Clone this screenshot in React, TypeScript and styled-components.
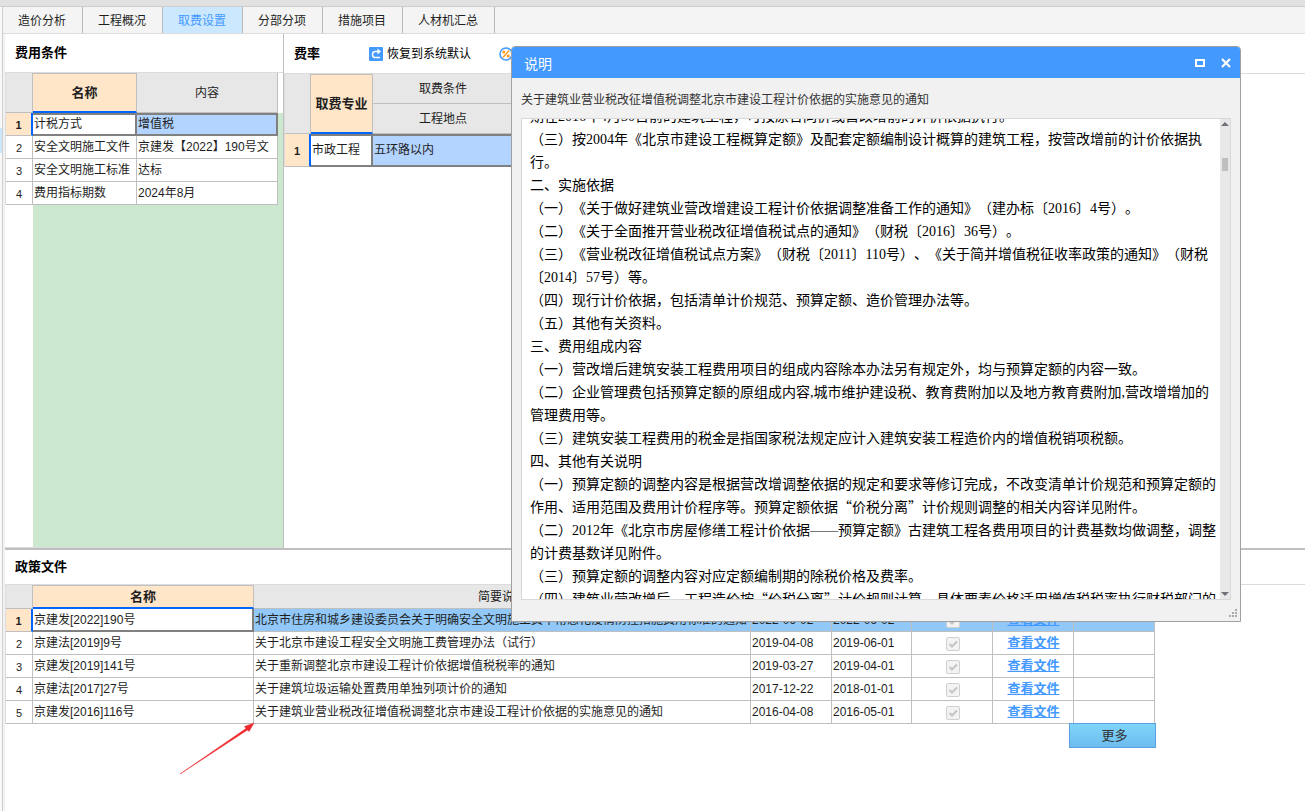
import React, { useLayoutEffect, useRef } from "react";
import styled, { createGlobalStyle, css } from "styled-components";

const line = "#bfbfbf";
const dark = "#808080";
const blue = "#4499ff";
const accent = "#0066ff";
const peach = "#ffe6c8";
const pale = "#b3d4ff";

const GlobalStyle = createGlobalStyle`
  * { box-sizing: border-box; }
  body {
    margin: 0;
    background: #fff;
    color: #1e1e1e;
    font: 12px/16px "Liberation Sans", "Noto Sans CJK SC", sans-serif;
    text-spacing-trim: space-all;
  }
  button { font: inherit; color: inherit; border: 0; padding: 0; background: none; }
`;

const Page = styled.div`
  position: relative;
  min-height: 100vh;
  display: flex;
  flex-direction: column;
  overflow: hidden;
`;
const TopStrip = styled.div`
  height: 7px;
  background: #e1e1e1;
  border-bottom: 1px solid #cccccc;
`;
const Shell = styled.div`
  flex: 1;
  display: flex;
`;
const Rail = styled.div`
  flex: none;
  width: 3px;
  background: #f8f8f8;
  border-right: 1px solid #cfcfcf;
`;
const RailMark = styled.div`
  margin-top: 121px;
  height: 25px;
  background: #cce8ff;
`;
const Workspace = styled.div`
  flex: 1;
  min-width: 0;
  display: flex;
  flex-direction: column;
`;
const TabBar = styled.nav`
  display: flex;
  height: 27px;
  background: #f4f4f4;
  border-bottom: 1px solid #dcdcdc;
`;
const Tab = styled.button<{ $active?: boolean }>`
  padding: 2px 16px 0 15px;
  border-right: 1px solid #b9b9b9;
  ${(p) => p.$active && css`background: #cce8ff; color: ${blue};`}
`;
const Content = styled.main`
  flex: 1;
  display: flex;
  flex-direction: column;
  border-left: 2px solid #f2f2f2;
`;
const Upper = styled.div`
  display: flex;
  height: 514px;
`;
const Panel = styled.section<{ $narrow?: boolean }>`
  display: flex;
  flex-direction: column;
  min-width: 0;
  ${(p) => (p.$narrow ? css`flex: none; width: 279px; border-right: 1px solid ${line};` : css`flex: 1;`)}
`;
const PanelHead = styled.header<{ $height: number }>`
  display: flex;
  align-items: center;
  height: ${(p) => p.$height}px;
  padding: 0 10px;
  border-bottom: 1px solid #dcdcdc;
`;
const Title = styled.h2`
  margin: 0;
  font-size: 13px;
  line-height: 20px;
  color: #000;
`;
const ToolButton = styled.button`
  display: flex;
  align-items: center;
  gap: 4px;
  white-space: nowrap;
  color: #000;
`;
const Tools = styled.div`
  display: flex;
  gap: 28px;
  margin-left: 49px;
`;
const GreenArea = styled.div`
  flex: 1;
  display: flex;
  flex-direction: column;
  background: linear-gradient(#fff 0 40px, #cce8cf 40px);
  border-bottom: 1px solid #dcdcdc;
`;
const Gutter = styled.div`
  flex: 1;
  width: 28px;
  background: #fff;
`;
const Grid = styled.table`
  table-layout: fixed;
  width: 0;
  border-collapse: separate;
  border-spacing: 0;
  border-left: 1px solid #dcdcdc;
`;
const HeadCell = styled.th<{ $current?: boolean }>`
  padding: 0;
  font-weight: 400;
  background: #e7e7e7;
  border-right: 1px solid ${line};
  border-bottom: 1px solid ${line};
  ${(p) => p.$current && css`
    background: ${peach};
    font-size: 13px;
    font-weight: 700;
    border-top: 1px solid ${line};
    border-bottom: 2px solid ${accent};
  `}
`;
const HeadRow = styled.tr<{ $height: number }>`
  height: ${(p) => p.$height}px;
`;
const Row = styled.tr<{ $height?: number; $fill?: string }>`
  height: ${(p) => p.$height ?? 23}px;
  background: ${(p) => p.$fill ?? "#fff"};
`;
const NumberCell = styled.th<{ $current?: boolean }>`
  padding: 1px 0 0;
  font-size: 11px;
  font-weight: 400;
  background: #fff;
  border-right: 1px solid ${line};
  border-bottom: 1px solid ${line};
  ${(p) => p.$current && css`
    background: ${peach};
    font-weight: 700;
    border-right: 2px solid ${accent};
  `}
`;
const Cell = styled.td<{ $mark?: "focus" | "picked"; $center?: boolean }>`
  padding: 0 0 0 1px;
  overflow: hidden;
  white-space: nowrap;
  text-align: ${(p) => (p.$center ? "center" : "left")};
  border-right: 1px solid ${line};
  border-bottom: 1px solid ${line};
  ${(p) => p.$mark && css`
    background: ${p.$mark === "focus" ? "#fff" : pale};
    border-color: ${dark};
    box-shadow: inset 0 2px ${dark}, inset 0 -1px ${dark}, inset -1px 0 ${dark};
  `}
`;
const FileCell = styled(Cell)<{ $focus?: boolean }>`
  ${(p) => p.$focus && css`
    background: #fff;
    border-color: ${dark};
    box-shadow: inset -1px -1px ${dark};
  `}
`;
const FileLink = styled.a`
  color: ${blue};
  font-size: 13px;
  font-weight: 700;
  text-decoration: underline;
`;
const Lower = styled.section`
  flex: 1;
  border-top: 2px solid ${line};
`;
const LowerTable = styled.div`
  width: min-content;
  display: flex;
  flex-direction: column;
`;
const MoreButton = styled.button`
  align-self: flex-end;
  width: 87px;
  height: 25px;
  margin: -1px -1px 0 0;
  padding-left: 4px;
  z-index: 1;
  color: #333;
  font-size: 13px;
  border: 1px solid #5aa0e0;
  background: linear-gradient(#7fd5f9, #6dbcf0);
`;
const CheckBox = styled.label`
  display: inline-grid;
  vertical-align: middle;
  & > * { grid-area: 1 / 1; }
  input {
    appearance: none;
    width: 14px;
    height: 14px;
    margin: 0;
    border: 1px solid #d0d0d0;
    border-radius: 2px;
    background: #f3f3f3;
  }
`;
const Dialog = styled.section`
  position: absolute;
  z-index: 2;
  left: 511px;
  top: 46px;
  width: 730px;
  height: 576px;
  display: flex;
  flex-direction: column;
  background: #f1f1f1;
  border: 1px solid #a0a0a0;
  border-radius: 4px 4px 0 0;
`;
const DialogBar = styled.header`
  display: flex;
  align-items: center;
  height: 31px;
  padding: 0 8px 0 12px;
  color: #fff;
  background: ${blue};
  border-radius: 3px 3px 0 0;
`;
const DialogTitle = styled.h2`
  flex: 1;
  margin: 0;
  padding-top: 2px;
  font-size: 14px;
  font-weight: 400;
`;
const WindowButton = styled.button`
  display: flex;
  margin-left: 14px;
`;
const Subject = styled.p`
  margin: 0;
  padding: 14px 9px 10px;
  line-height: 16px;
  color: #333;
`;
const TextBox = styled.div`
  flex: 1;
  min-height: 0;
  display: flex;
  margin: 0 9px;
  border: 1px solid #d8d8d8;
  background: #fff;
`;
const Scroller = styled.div`
  flex: 1;
  overflow: hidden;
  padding-left: 8px;
  color: #000;
  font: 14px/23px "Liberation Serif", "Noto Sans CJK SC", sans-serif;
`;
const Paragraph = styled.p`
  margin: 0;
`;
const WideMark = styled.span`
  font-family: "Noto Sans CJK SC", sans-serif;
  line-height: 1;
`;
const ScrollTrack = styled.div`
  width: 10px;
  display: flex;
  flex-direction: column;
  align-items: center;
  justify-content: space-between;
  padding: 3px 0;
  background: #e8e8e8;
`;
const ScrollThumb = styled.div`
  width: 6px;
  height: 13px;
  margin: 32px 0 auto;
  background: #bfbfbf;
`;
const DialogFoot = styled.footer`
  display: flex;
  justify-content: flex-end;
  align-items: flex-end;
  height: 21px;
  padding: 4px 3px;
`;
const Arrow = styled.svg`
  position: absolute;
  left: 178px;
  top: 720px;
  pointer-events: none;
`;

const tabs = ["造价分析", "工程概况", "取费设置", "分部分项", "措施项目", "人材机汇总"];

const conditions = [
  ["计税方式", "增值税"],
  ["安全文明施工文件", "京建发【2022】190号文"],
  ["安全文明施工标准", "达标"],
  ["费用指标期数", "2024年8月"],
];

const files = [
  ["京建发[2022]190号", "北京市住房和城乡建设委员会关于明确安全文明施工费中常态化疫情防控措施费用标准的通知", "2022-06-02", "2022-06-02"],
  ["京建法[2019]9号", "关于北京市建设工程安全文明施工费管理办法（试行）", "2019-04-08", "2019-06-01"],
  ["京建发[2019]141号", "关于重新调整北京市建设工程计价依据增值税税率的通知", "2019-03-27", "2019-04-01"],
  ["京建法[2017]27号", "关于建筑垃圾运输处置费用单独列项计价的通知", "2017-12-22", "2018-01-01"],
  ["京建发[2016]116号", "关于建筑业营业税改征增值税调整北京市建设工程计价依据的实施意见的通知", "2016-04-08", "2016-05-01"],
];

const notice = [
  "期在2016年4月30日前的建筑工程，可按原合同价或营改增前的计价依据执行。",
  "（三）按2004年《北京市建设工程概算定额》及配套定额编制设计概算的建筑工程，按营改增前的计价依据执行。",
  "二、实施依据",
  "（一）《关于做好建筑业营改增建设工程计价依据调整准备工作的通知》（建办标〔2016〕4号）。",
  "（二）《关于全面推开营业税改征增值税试点的通知》（财税〔2016〕36号）。",
  "（三）《营业税改征增值税试点方案》（财税〔2011〕110号）、《关于简并增值税征收率政策的通知》（财税〔2014〕57号）等。",
  "（四）现行计价依据，包括清单计价规范、预算定额、造价管理办法等。",
  "（五）其他有关资料。",
  "三、费用组成内容",
  "（一）营改增后建筑安装工程费用项目的组成内容除本办法另有规定外，均与预算定额的内容一致。",
  "（二）企业管理费包括预算定额的原组成内容,城市维护建设税、教育费附加以及地方教育费附加,营改增增加的管理费用等。",
  "（三）建筑安装工程费用的税金是指国家税法规定应计入建筑安装工程造价内的增值税销项税额。",
  "四、其他有关说明",
  "（一）预算定额的调整内容是根据营改增调整依据的规定和要求等修订完成，不改变清单计价规范和预算定额的作用、适用范围及费用计价程序等。预算定额依据“价税分离”计价规则调整的相关内容详见附件。",
  "（二）2012年《北京市房屋修缮工程计价依据——预算定额》古建筑工程各费用项目的计费基数均做调整，调整的计费基数详见附件。",
  "（三）预算定额的调整内容对应定额编制期的除税价格及费率。",
  "（四）建筑业营改增后，工程造价按“价税分离”计价规则计算，具体要素价格适用增值税税率执行财税部门的相关规定。",
];

function withWideMarks(text: string) {
  return text.split(/([“”])/).map((part, i) =>
    part === "“" || part === "”" ? <WideMark key={i}>{part}</WideMark> : part
  );
}

function ResetIcon() {
  return (
    <svg width="14" height="14" viewBox="0 0 14 14" aria-hidden="true">
      <rect width="14" height="14" rx="1" fill={blue} />
      <path d="M9 4.500H6Q3.500 4.500 3.500 7.500T6 10.500H11" fill="none" stroke="#fff" strokeWidth="1.500" />
      <path d="M8.500 1.500 12 4.500 8.500 7.500z" fill="#fff" />
    </svg>
  );
}

function RateIcon() {
  return (
    <svg width="14" height="14" viewBox="0 0 14 14" aria-hidden="true">
      <circle cx="7" cy="7" r="6" fill="#fff" stroke={blue} strokeWidth="1.600" />
      <g fill="none" stroke="#ff9a1e" strokeWidth="1.300">
        <path d="M10 3.500 4 10.500" />
        <circle cx="4.800" cy="5" r="0.900" />
        <circle cx="9.200" cy="9" r="0.900" />
      </g>
    </svg>
  );
}

function Tick({ name }: { name: string }) {
  return (
    <CheckBox aria-label={name}>
      <input type="checkbox" defaultChecked disabled />
      <svg width="14" height="14" viewBox="0 0 14 14" aria-hidden="true">
        <path d="M3.500 7 6 9.500l5-5" fill="none" stroke="#c4c4c4" strokeWidth="2" />
      </svg>
    </CheckBox>
  );
}

function ConditionPanel() {
  return (
    <Panel $narrow>
      <PanelHead $height={39}><Title>费用条件</Title></PanelHead>
      <GreenArea>
        <Grid>
          <colgroup><col style={{ width: 27 }} /><col style={{ width: 104 }} /><col style={{ width: 141 }} /></colgroup>
          <thead>
            <HeadRow $height={40}>
              <HeadCell />
              <HeadCell $current>名称</HeadCell>
              <HeadCell>内容</HeadCell>
            </HeadRow>
          </thead>
          <tbody>
            {conditions.map(([name, value], i) => (
              <Row key={name}>
                <NumberCell $current={i === 0}>{i + 1}</NumberCell>
                <Cell $mark={i === 0 ? "focus" : undefined}>{name}</Cell>
                <Cell $mark={i === 0 ? "picked" : undefined}>{value}</Cell>
              </Row>
            ))}
          </tbody>
        </Grid>
        <Gutter />
      </GreenArea>
    </Panel>
  );
}

function RatePanel() {
  return (
    <Panel>
      <PanelHead $height={40}>
        <Title>费率</Title>
        <Tools>
          <ToolButton><ResetIcon />恢复到系统默认</ToolButton>
          <ToolButton><RateIcon />查询费率信息</ToolButton>
        </Tools>
      </PanelHead>
      <Grid>
        <colgroup><col style={{ width: 26 }} /><col style={{ width: 62 }} /><col style={{ width: 141 }} /></colgroup>
        <thead>
          <HeadRow $height={30}>
            <HeadCell rowSpan={2} />
            <HeadCell rowSpan={2} $current>取费专业</HeadCell>
            <HeadCell>取费条件</HeadCell>
          </HeadRow>
          <HeadRow $height={30}><HeadCell>工程地点</HeadCell></HeadRow>
        </thead>
        <tbody>
          <Row $height={33}>
            <NumberCell $current>1</NumberCell>
            <Cell $mark="focus">市政工程</Cell>
            <Cell $mark="picked">五环路以内</Cell>
          </Row>
        </tbody>
      </Grid>
    </Panel>
  );
}

function FilePanel() {
  return (
    <Lower>
      <PanelHead $height={35}><Title>政策文件</Title></PanelHead>
      <LowerTable>
        <Grid>
          <colgroup>
            {[27, 221, 497, 81, 80, 81, 81, 81].map((w, i) => <col key={i} style={{ width: w }} />)}
          </colgroup>
          <thead>
            <HeadRow $height={24}>
              <HeadCell />
              <HeadCell $current>名称</HeadCell>
              <HeadCell>简要说明</HeadCell>
              <HeadCell>发布日期</HeadCell>
              <HeadCell>执行日期</HeadCell>
              <HeadCell>执行</HeadCell>
              <HeadCell>文件内容</HeadCell>
              <HeadCell>备注</HeadCell>
            </HeadRow>
          </thead>
          <tbody>
            {files.map(([name, note, issued, effective], i) => (
              <Row key={name} $fill={i === 0 ? "#91c8f8" : undefined}>
                <NumberCell $current={i === 0}>{i + 1}</NumberCell>
                <FileCell $focus={i === 0}>{name}</FileCell>
                <FileCell>{note}</FileCell>
                <FileCell>{issued}</FileCell>
                <FileCell>{effective}</FileCell>
                <FileCell $center><Tick name={name} /></FileCell>
                <FileCell $center><FileLink href="#">查看文件</FileLink></FileCell>
                <FileCell />
              </Row>
            ))}
          </tbody>
        </Grid>
        <MoreButton>更多</MoreButton>
      </LowerTable>
    </Lower>
  );
}

function NoticeDialog() {
  const scroller = useRef<HTMLDivElement>(null);
  useLayoutEffect(() => {
    if (scroller.current) scroller.current.scrollTop = 14;
  }, []);
  return (
    <Dialog role="dialog" aria-label="说明">
      <DialogBar>
        <DialogTitle>说明</DialogTitle>
        <WindowButton aria-label="最大化">
          <svg width="12" height="10" viewBox="0 0 12 10"><path d="M2 2h8v6H2z" fill="none" stroke="#fff" strokeWidth="2" /></svg>
        </WindowButton>
        <WindowButton aria-label="关闭">
          <svg width="12" height="10" viewBox="0 0 12 10"><path d="M2 1l8 8M10 1 2 9" stroke="#fff" strokeWidth="2.200" /></svg>
        </WindowButton>
      </DialogBar>
      <Subject>关于建筑业营业税改征增值税调整北京市建设工程计价依据的实施意见的通知</Subject>
      <TextBox>
        <Scroller ref={scroller} lang="zh-CN">
          {notice.map((text) => <Paragraph key={text}>{withWideMarks(text)}</Paragraph>)}
        </Scroller>
        <ScrollTrack>
          <svg width="8" height="4" viewBox="0 0 8 4"><path d="M0 4 4 0l4 4z" fill="#707078" /></svg>
          <ScrollThumb />
          <svg width="8" height="4" viewBox="0 0 8 4"><path d="M0 0h8L4 4z" fill="#707078" /></svg>
        </ScrollTrack>
      </TextBox>
      <DialogFoot>
        <svg width="8" height="8" viewBox="0 0 8 8">
          <path d="M6 0h2v2H6zM3 3h2v2H3zM6 3h2v2H6zM0 6h2v2H0zM3 6h2v2H3zM6 6h2v2H6z" fill="#aaa" />
        </svg>
      </DialogFoot>
    </Dialog>
  );
}

export default function App() {
  return (
    <Page lang="zh-CN">
      <GlobalStyle />
      <TopStrip />
      <Shell>
        <Rail><RailMark /></Rail>
        <Workspace>
          <TabBar>
            {tabs.map((tab) => <Tab key={tab} $active={tab === "取费设置"}>{tab}</Tab>)}
          </TabBar>
          <Content>
            <Upper>
              <ConditionPanel />
              <RatePanel />
            </Upper>
            <FilePanel />
          </Content>
        </Workspace>
      </Shell>
      <Arrow width="80" height="56" viewBox="0 0 80 56" aria-hidden="true">
        <path d="M2 54 68 8.500 66.500 6.500 76 3 71 11.500 69.500 10z" fill="#ee2a30" stroke="#ee2a30" strokeWidth="0.500" />
      </Arrow>
      <NoticeDialog />
    </Page>
  );
}
